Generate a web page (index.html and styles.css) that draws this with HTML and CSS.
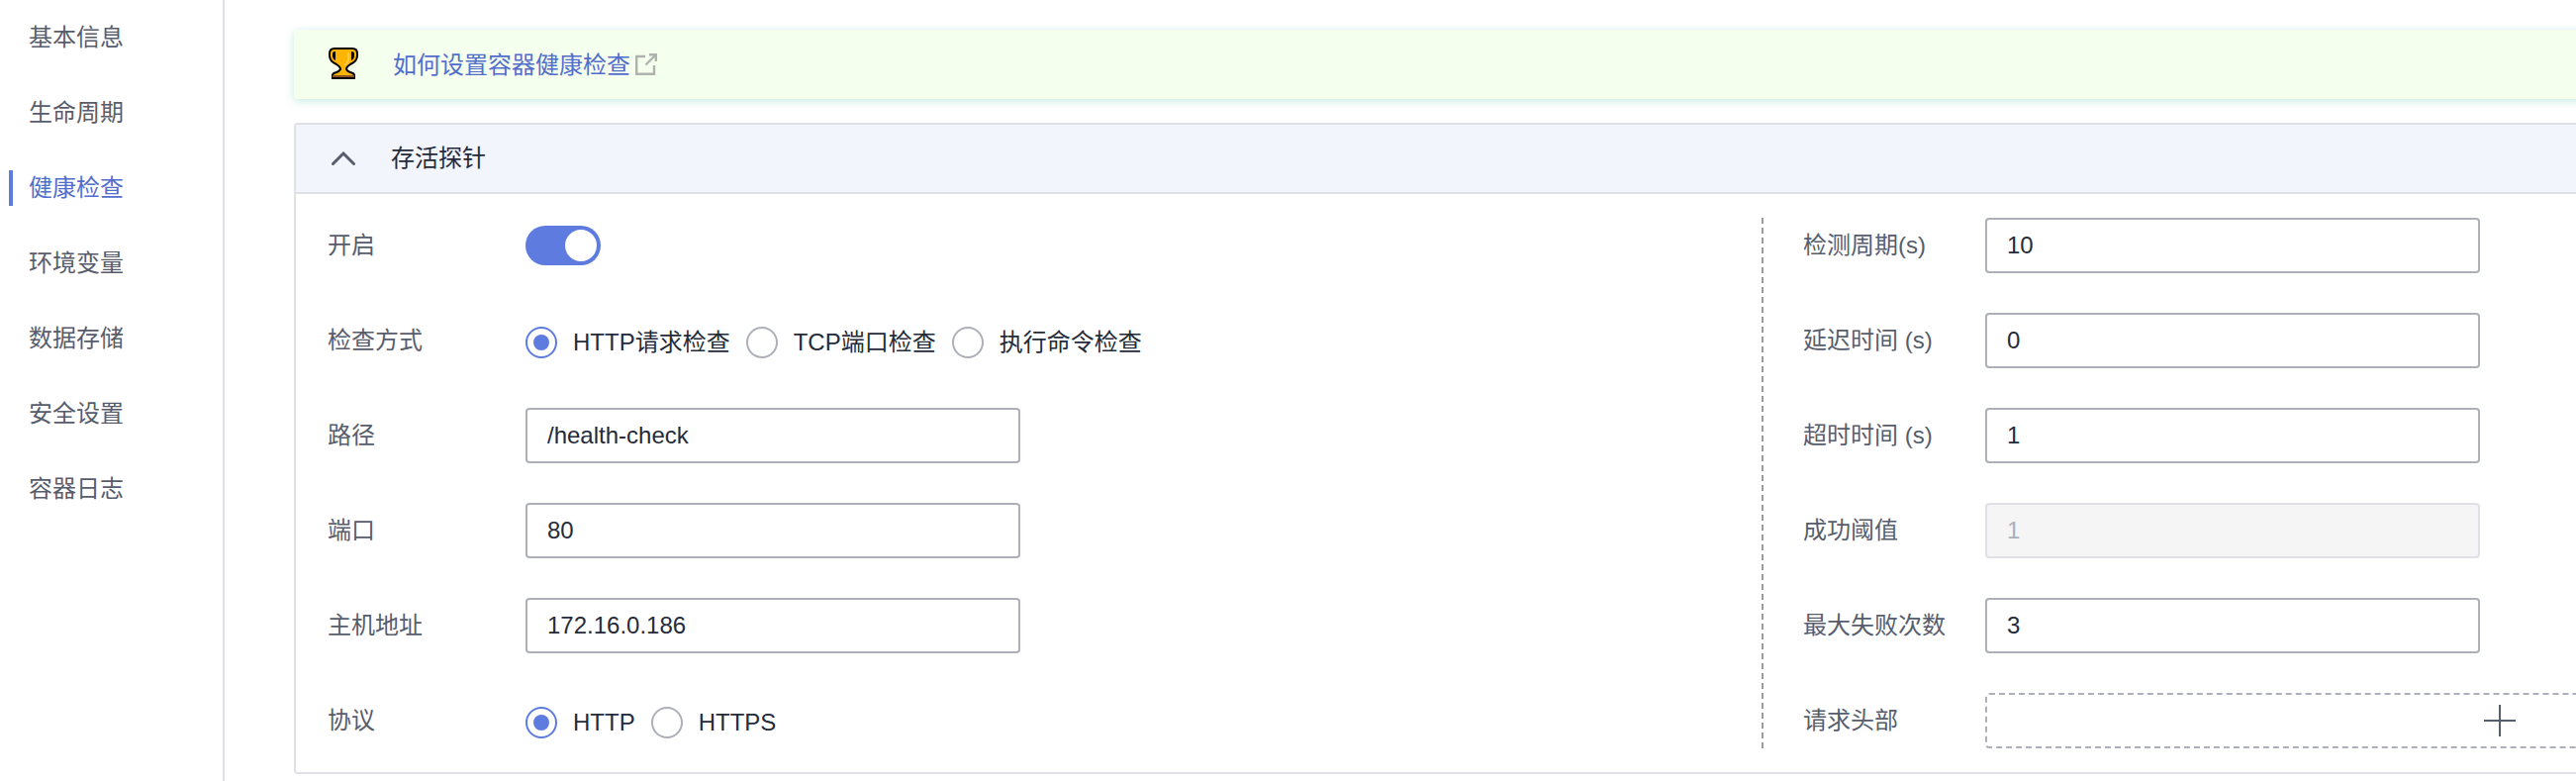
FILE: index.html
```html
<!DOCTYPE html>
<html lang="zh-CN">
<head>
<meta charset="utf-8">
<title>健康检查</title>
<link rel="stylesheet" href="styles.css">
</head>
<body>
<div class="layout">
  <nav class="sidebar">
    <a class="nav-item">基本信息</a>
    <a class="nav-item">生命周期</a>
    <a class="nav-item active">健康检查</a>
    <a class="nav-item">环境变量</a>
    <a class="nav-item">数据存储</a>
    <a class="nav-item">安全设置</a>
    <a class="nav-item">容器日志</a>
  </nav>
  <main class="content">
    <div class="banner">
      <svg class="trophy" width="30" height="32" viewBox="0 0 30 32">
        <path d="M6 1H24Q29 1 29 6V8Q29 14 22 17Q18 19.500 18 22Q19 24 22 25Q26 26 26 28V31H4V28Q4 26 8 25Q11 24 12 22Q12 19.500 8 17Q1 14 1 8V6Q1 1 6 1Z" fill="#ffb400" stroke="#000" stroke-width="2"/>
        <path d="M4 28H26V31H4Z" fill="#8d5524"/>
        <path d="M3 31H27" stroke="#000" stroke-width="2"/>
        <path d="M4 6Q4 4 7 4V13Q4 12 4 8ZM26 6Q26 4 23 4V13Q26 12 26 8Z" fill="#000"/>
        <path d="M20 5V13Q19 16 16 18" fill="none" stroke="#ffd257" stroke-width="1.500"/>
      </svg>
      <a class="banner-link">如何设置容器健康检查</a>
      <svg class="external" width="22" height="22" viewBox="0 0 22 22" fill="none" stroke="#b0b2b0" stroke-width="2.400">
        <path d="M10 3H1.200V20.800H19V12M14 1.200H20.800V8M20.500 1.500L10.500 11.500"/>
      </svg>
    </div>
    <section class="card">
      <header class="card-header">
        <svg class="chevron" width="24" height="14" viewBox="0 0 24 14" fill="none" stroke="#575d6c" stroke-width="3" stroke-linecap="round">
          <path d="M1.500 12.500L12 2L22.500 12.500"/>
        </svg>
        <span>存活探针</span>
      </header>
      <div class="card-body">
        <div class="column left">
          <div class="row"><span class="label">开启</span><span class="toggle"><span class="knob"></span></span></div>
          <div class="row">
            <span class="label">检查方式</span>
            <div class="radios">
              <label class="option"><span class="radio checked"></span>HTTP请求检查</label>
              <label class="option"><span class="radio"></span>TCP端口检查</label>
              <label class="option"><span class="radio"></span>执行命令检查</label>
            </div>
          </div>
          <div class="row"><span class="label">路径</span><input class="input" value="/health-check"></div>
          <div class="row"><span class="label">端口</span><input class="input" value="80"></div>
          <div class="row"><span class="label">主机地址</span><input class="input" value="172.16.0.186"></div>
          <div class="row">
            <span class="label">协议</span>
            <div class="radios">
              <label class="option"><span class="radio checked"></span>HTTP</label>
              <label class="option"><span class="radio"></span>HTTPS</label>
            </div>
          </div>
        </div>
        <div class="column right">
          <div class="row"><span class="label">检测周期(s)</span><input class="input" value="10"></div>
          <div class="row"><span class="label">延迟时间 (s)</span><input class="input" value="0"></div>
          <div class="row"><span class="label">超时时间 (s)</span><input class="input" value="1"></div>
          <div class="row"><span class="label">成功阈值</span><input class="input" value="1" disabled></div>
          <div class="row"><span class="label">最大失败次数</span><input class="input" value="3"></div>
          <div class="row">
            <span class="label">请求头部</span>
            <div class="add-box">
              <svg width="32" height="32" viewBox="0 0 32 32" stroke="#575d6c" stroke-width="2"><path d="M16 0V32M0 16H32"/></svg>
            </div>
          </div>
        </div>
      </div>
    </section>
  </main>
</div>
</body>
</html>
```
FILE: styles.css
```css
* { box-sizing: border-box; }
body {
  margin: 0;
  background: #fff;
  color: #252b3a;
  font: 24px/36px "Liberation Sans", "Noto Sans CJK SC", sans-serif;
}
.layout { display: flex; height: 789px; overflow: hidden; }
.sidebar {
  display: flex;
  flex: none;
  flex-direction: column;
  gap: 40px;
  width: 227px;
  padding: 20px 0 0 9px;
  border-right: 2px solid #dfe1e6;
}
.nav-item {
  height: 36px;
  padding-left: 16px;
  border-left: 4px solid transparent;
  color: #575d6c;
}
.nav-item.active { border-left-color: #5e7ce0; color: #526ecc; }
.content { flex: none; width: 2860px; padding: 30px 0 0 70px; }
.banner {
  display: flex;
  align-items: center;
  height: 70px;
  padding-left: 35px;
  border-radius: 4px;
  background: #f5ffed;
  box-shadow: 0 2px 8px rgba(80, 200, 170, .35);
}
.trophy { flex: none; margin-bottom: 2px; }
.banner-link { margin-left: 35px; padding-top: 2px; color: #526ecc; }
.external { margin-left: 5px; }
.card {
  height: 658px;
  margin-top: 24px;
  border: 2px solid #dfe1e6;
  border-radius: 4px;
}
.card-header {
  display: flex;
  align-items: center;
  gap: 36px;
  height: 70px;
  padding-left: 36px;
  border-bottom: 2px solid #dfe1e6;
  background: #f2f5fc;
}
.card-body { display: flex; padding: 24px 0 0 32px; }
.column { display: flex; flex: none; flex-direction: column; gap: 40px; height: 536px; }
.left { width: 1449px; }
.right { padding-left: 40px; border-left: 2px dashed #9b9b9b; }
.row { display: flex; align-items: center; height: 56px; }
.label { flex: none; width: 200px; color: #575d6c; white-space: nowrap; }
.right .label { width: 184px; }
.toggle {
  display: flex;
  justify-content: flex-end;
  width: 76px;
  height: 40px;
  padding: 4px;
  border-radius: 20px;
  background: #5e7ce0;
}
.knob { width: 32px; height: 32px; border-radius: 50%; background: #fff; }
.radios { display: flex; gap: 16px; padding-top: 4px; }
.option { display: flex; align-items: center; gap: 16px; white-space: nowrap; }
.radio {
  display: grid;
  flex: none;
  place-items: center;
  width: 32px;
  height: 32px;
  border: 2px solid #adb0b8;
  border-radius: 50%;
}
.radio.checked { border-color: #5e7ce0; }
.radio.checked::after {
  width: 16px;
  height: 16px;
  border-radius: 50%;
  background: #5e7ce0;
  content: "";
}
.input {
  width: 500px;
  height: 56px;
  padding: 0 20px;
  border: 2px solid #adb0b8;
  border-radius: 4px;
  background: #fff;
  color: #252b3a;
  font: inherit;
}
.input:disabled { border-color: #dfe1e6; background: #f5f5f6; color: #adb0b8; }
.add-box {
  display: flex;
  align-items: center;
  justify-content: center;
  width: 1040px;
  height: 56px;
  border: 2px dashed #adb0b8;
  border-radius: 4px;
}
```
